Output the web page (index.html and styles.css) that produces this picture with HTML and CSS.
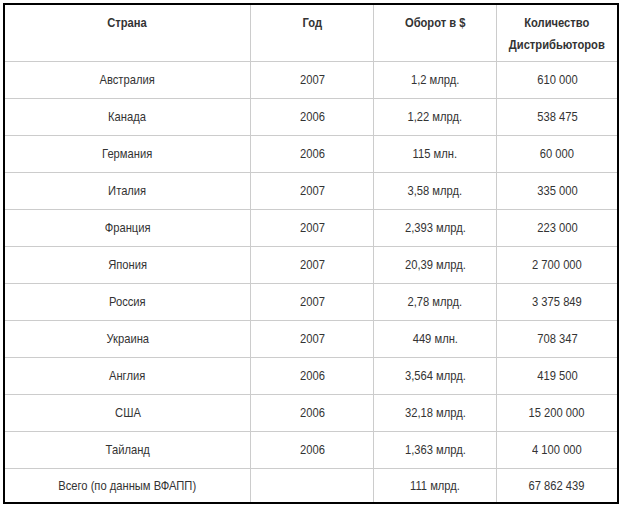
FILE: index.html
```html
<!DOCTYPE html>
<html lang="ru">
<head>
<meta charset="utf-8">
<link rel="stylesheet" href="styles.css">
</head>
<body>
<div class="wrap">
<table class="stats">
<colgroup><col class="c1"><col class="c2"><col class="c3"><col class="c4"></colgroup>
<thead>
<tr><th><span class="t">Страна</span></th><th><span class="t">Год</span></th><th><span class="t">Оборот в $</span></th><th><span class="t">Количество<br>Дистрибьюторов</span></th></tr>
</thead>
<tbody>
<tr><td><span class="t">Австралия</span></td><td><span class="t">2007</span></td><td><span class="t">1,2 млрд.</span></td><td><span class="t">610 000</span></td></tr>
<tr><td><span class="t">Канада</span></td><td><span class="t">2006</span></td><td><span class="t">1,22 млрд.</span></td><td><span class="t">538 475</span></td></tr>
<tr><td><span class="t">Германия</span></td><td><span class="t">2006</span></td><td><span class="t">115 млн.</span></td><td><span class="t">60 000</span></td></tr>
<tr><td><span class="t">Италия</span></td><td><span class="t">2007</span></td><td><span class="t">3,58 млрд.</span></td><td><span class="t">335 000</span></td></tr>
<tr><td><span class="t">Франция</span></td><td><span class="t">2007</span></td><td><span class="t">2,393 млрд.</span></td><td><span class="t">223 000</span></td></tr>
<tr><td><span class="t">Япония</span></td><td><span class="t">2007</span></td><td><span class="t">20,39 млрд.</span></td><td><span class="t">2 700 000</span></td></tr>
<tr><td><span class="t">Россия</span></td><td><span class="t">2007</span></td><td><span class="t">2,78 млрд.</span></td><td><span class="t">3 375 849</span></td></tr>
<tr><td><span class="t">Украина</span></td><td><span class="t">2007</span></td><td><span class="t">449 млн.</span></td><td><span class="t">708 347</span></td></tr>
<tr><td><span class="t">Англия</span></td><td><span class="t">2006</span></td><td><span class="t">3,564 млрд.</span></td><td><span class="t">419 500</span></td></tr>
<tr><td><span class="t">США</span></td><td><span class="t">2006</span></td><td><span class="t">32,18 млрд.</span></td><td><span class="t">15 200 000</span></td></tr>
<tr><td><span class="t">Тайланд</span></td><td><span class="t">2006</span></td><td><span class="t">1,363 млрд.</span></td><td><span class="t">4 100 000</span></td></tr>
<tr class="total"><td><span class="t">Всего (по данным ВФАПП)</span></td><td></td><td><span class="t">111 млрд.</span></td><td><span class="t">67 862 439</span></td></tr>
</tbody>
</table>
</div>
</body>
</html>
```
FILE: styles.css
```css
html, body {
  margin: 0;
  padding: 0;
  background: #fff;
}
.wrap {
  padding: 3px;
}
.stats {
  width: 616px;
  table-layout: fixed;
  border-collapse: separate;
  border-spacing: 0;
  border: 2px solid #000;
  font-family: "Liberation Sans", Arial, sans-serif;
  font-size: 13px;
  color: #333;
}
.c1 { width: 246px; }
.c2 { width: 123px; }
.c3 { width: 123px; }
.c4 { width: 120px; }
.stats th, .stats td {
  box-sizing: border-box;
  padding: 0;
  text-align: center;
  border-right: 1px solid #ccc;
  border-bottom: 1px solid #ccc;
  white-space: nowrap;
}
.stats th:last-child, .stats td:last-child {
  border-right: none;
}
.t {
  display: inline-block;
  transform: scaleX(0.86);
  transform-origin: center;
}
.stats th {
  height: 57px;
  vertical-align: top;
  padding-top: 7px;
  font-weight: bold;
  line-height: 22px;
}
.stats td {
  height: 37px;
  vertical-align: middle;
  line-height: 16px;
}
.stats tr.total td {
  border-bottom: none;
  height: 33px;
}
```
